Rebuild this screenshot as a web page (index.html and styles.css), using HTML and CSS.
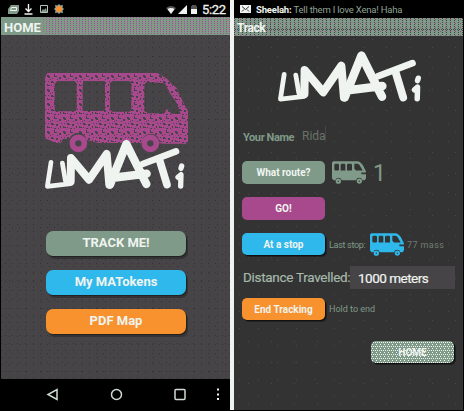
FILE: index.html
```html
<!DOCTYPE html>
<html lang="en">
<head>
<meta charset="utf-8">
<title>UMATi</title>
<link rel="stylesheet" href="styles.css">
</head>
<body>
<svg class="defs" width="0" height="0">
  <defs>
    <pattern id="mosaic" width="48" height="42" patternUnits="userSpaceOnUse">
      <rect width="48" height="42" fill="#a9498d"/>
      <path fill="#474447" d="M3 3h6v3h3v6h-6v-3h-3zM24 0h3v6h6v3h-9zM39 9h6v6h-6zM15 21h6v3h3v3h-9zM30 24h6v6h-6zM3 30h3v3h6v3h-9zM18 12h3v3h-3zM24 36h6v3h-6zM42 30h3v6h-3zM6 21h3v3h-3zM33 15h3v3h-3zM15 33h3v3h-3zM36 36h3v3h-3zM12 15h3v3h-3zM45 21h3v3h-3z"/>
    </pattern>
    <symbol id="word" viewBox="42 236 424 154">
      <g fill="none" stroke="#eff4f0" stroke-linecap="round" stroke-linejoin="round">
        <path stroke-width="14" d="M63 307L52 379L122 371M97 309L106 362"/>
        <path stroke-width="24" d="M122 364L123 294L177 359L230 282L238 374"/>
        <path stroke-width="25" d="M240 374L289 252L349 372M244 354L350 341"/>
        <path stroke-width="20" d="M338 312L438 274"/>
        <path stroke-width="23" d="M388 298L411 374"/>
        <path stroke-width="16" d="M455 318L453 325M444 352L453 344L452 378"/>
      </g>
    </symbol>
    <symbol id="bus" viewBox="0 0 102 68">
      <path fill="currentColor" fill-rule="evenodd" d="M4 0H78Q92 5 98 23L102 31V34H88V39H102V51L98 57H91A10 10 0 0 0 72 57H29A10 10 0 0 0 10 57H5L0 52V4ZM9 8L7 11V25L9 28H19L21 25V11L19 8ZM28 8L26 11V28H40V11L38 8ZM47 8L45 11V28H60V11L58 8ZM67 8V23L72 28H92L82 11L77 8Z"/>
      <path fill="none" stroke="currentColor" stroke-width="6" d="M24 60a5 5 0 1 1-10 0a5 5 0 1 1 10 0M87 60a5 5 0 1 1-10 0a5 5 0 1 1 10 0"/>
    </symbol>
  </defs>
</svg>
<main class="screens">
  <section class="phone phone-home">
    <header class="status">
      <svg class="status-icons" width="58" height="12" viewBox="0 0 58 12">
        <path fill="#7f9a88" d="M3 1h8v6L9 10H0V5z"/><path stroke="#eff4f0" fill="none" d="M3.500 3.500h5v3h-6z"/>
        <path stroke="#eff4f0" stroke-width="1.400" fill="none" d="M20.500 0v7M17.500 4.500l3 3l3-3M16.500 10h8"/>
        <path stroke="#b9c5bc" fill="none" d="M32.500 1.500h7v7h-7z"/><path fill="#7f9a88" d="M33 8l2-3l1 1l2-2l1 4z"/>
        <path fill="#93a899" d="M51 0l1.500 1.500l2.500-.5l-.5 2.500L56 5l-1.500 1.500l.5 2.500l-2.500-.5L51 10l-1.500-1.500l-2.500.5l.5-2.500L46 5l1.500-1.500L47 1l2.500.5z"/><circle cx="51" cy="5" r="3" fill="#f7922e"/>
      </svg>
      <svg class="signal-icons" width="33" height="10" viewBox="0 0 33 10">
        <path fill="#555355" d="M0 3Q5 -1 10 3L5 9z"/><path fill="#eff4f0" d="M1.500 4Q5 2 8.500 4L5 9z"/>
        <path fill="#eff4f0" d="M12 9L21 0V9z"/>
        <path fill="#555355" d="M25 1h1V0h4v1h1v4h-6z"/><path fill="#eff4f0" d="M25 4h6v5h-6z"/>
      </svg>
      <span class="clock">5:22</span>
    </header>
    <h1 class="title title-home">HOME</h1>
    <div class="content">
      <svg class="brand" viewBox="42 36 432 354">
        <path fill="url(#mosaic)" fill-rule="evenodd" d="M52 39H382L411 56L423 70L440 84L458 124L474 153V244L468 251H402L386 249V236C379 218 348 218 339 235L334 249H204L168 239C168 212 124 214 119 236L98 237L93 249H78L45 235V54ZM82 63L74 71V154H134L140 149V71L134 63ZM167 63L158 71V153H218L225 149V63ZM247 63L240 70V149L246 155H299L304 150V70L298 63ZM350 66L343 74V153L356 160H404L410 148L419 150L422 161H452L437 124L418 97L405 70Z"/>
        <g fill="none" stroke="#a9498d" stroke-width="17"><circle cx="145" cy="250" r="18"/><circle cx="361" cy="250" r="18"/></g>
        <use href="#word" x="42" y="236" width="424" height="154"/>
      </svg>
      <nav class="menu">
        <button class="btn green wide">TRACK ME!</button>
        <button class="btn blue wide">My MATokens</button>
        <button class="btn orange wide">PDF Map</button>
      </nav>
    </div>
    <footer class="navbar">
      <svg width="230" height="32" viewBox="0 0 230 32" fill="none" stroke="#cfdbd2" stroke-width="1.500">
        <path d="M57 10.500v10L48 15.500z"/><circle cx="116.500" cy="15.500" r="5"/><rect x="175" y="10.500" width="10" height="10" rx="1"/>
        <path stroke="none" fill="#eff4f0" d="M217 9.500h2v2h-2zM217 14.500h2v2h-2zM217 19h2v2h-2z"/>
      </svg>
    </footer>
  </section>
  <section class="phone phone-track">
    <header class="status notice">
      <svg class="mail" width="11" height="8" viewBox="0 0 11 8"><path fill="#eff4f0" d="M0 0h11v8H0z"/><path d="M2 1.500l3.500 3l3.500-3M2 6.500l2-2M9 6.500l-2-2" fill="none" stroke="#333"/></svg>
      <p><b>Sheelah:</b> <span>Tell them I love Xena! Haha</span></p>
    </header>
    <h1 class="title title-track">Track</h1>
    <div class="form">
      <svg class="wordmark"><use href="#word"/></svg>
      <div class="row name"><label>Your Name</label><span class="entry">Rida</span></div>
      <div class="row route"><button class="btn green">What route?</button><svg class="bus"><use href="#bus"/></svg><span class="number">1</span></div>
      <div class="row go"><button class="btn pink">GO!</button></div>
      <div class="row stop"><button class="btn blue shade">At a stop</button><span class="hint last">Last stop:</span><svg class="bus sky"><use href="#bus"/></svg><span class="hint mass">77 mass</span></div>
      <div class="row distance"><span class="dist-label">Distance Travelled:</span><span class="dist-value">1000 meters</span></div>
      <div class="row end"><button class="btn orange shade">End Tracking</button><span class="hint hold">Hold to end</span></div>
      <div class="row home"><button class="btn green shade speckled">HOME</button></div>
    </div>
  </section>
</main>
</body>
</html>
```
FILE: styles.css
```css
* { box-sizing: border-box; }
body { margin: 0; background: #000; font-family: Roboto, "Liberation Sans", sans-serif; color: #eff4f0; overflow: hidden; }
h1, p { margin: 0; }
.defs { position: absolute; }
svg { display: block; flex: none; }
.screens { display: flex; width: 464px; height: 411px; }
.phone { display: flex; flex-direction: column; height: 411px; flex: none; }
.phone-home { width: 230px; padding-left: 1px; }
.phone-track { width: 234px; height: 410px; border-left: 4px solid #eff4f0; padding-right: 1px; }
.status { display: flex; height: 17px; flex: none; background: #000; }
.status-icons { margin: 4px 0 0 7px; }
.signal-icons { margin: 5px 3px 0 100px; }
.clock { font-size: 13px; line-height: 19px; letter-spacing: -.3px; -webkit-text-stroke: .3px; }
.title { flex: none; height: 18px; font-size: 13px; line-height: 21px; padding-left: 3px; background-color: #7f9a88; }
.title-home {
  background-image: linear-gradient(90deg, #7f9a88 38px, transparent 48px), conic-gradient(at 1px 1px, transparent 75%, #a9498d 0), conic-gradient(at 1px 1px, transparent 75%, #a9498d 0);
  background-size: 100% 100%, 6px 4px, 3px 2px;
  background-position: 0 0, 0 2px, 0 6px;
  background-repeat: no-repeat, repeat-x, repeat;
  background-size: 100% 100%, 6px 4px, 3px 2px;
}
.content {
  height: 344px; flex: none; padding: 37px 0 0 43px; background-color: #474447;
  background-image: conic-gradient(at 1px 1px, transparent 75%, #333 0), conic-gradient(at 1px 1px, transparent 75%, #333 0);
  background-size: 8px 7px, 7px 9px;
  background-position: 0 0, 4px 3px;
}
.brand { width: 144px; height: 118px; }
.menu { display: flex; flex-direction: column; gap: 14px; margin: 41px 0 0 2px; }
.btn { border: 0; border-radius: 5px; padding: 0; width: 83px; height: 23px; font: bold 10px/19px Roboto, "Liberation Sans", sans-serif; color: #eff4f0; flex: none; white-space: nowrap; }
.wide { width: 140px; height: 25px; border-radius: 7px; font-size: 13px; box-shadow: 1px 1px 0 #222, 2px 3px 0 #333; padding-bottom: 3px; }
.shade { height: 22px; box-shadow: 1px 1px 0 #111, 2px 2px 0 #222; }
.green { background-color: #7f9a88; }
.blue { background-color: #2fb8eb; }
.orange { background-color: #f7922e; }
.pink { background-color: #a9498d; }
.navbar { height: 32px; flex: none; margin-left: -1px; }
.notice { height: 18px; align-items: center; padding-left: 6px; gap: 5px; font-size: 9.5px; letter-spacing: -.2px; }
.notice span { color: #91a397; }
.title-track {
  font-size: 12px; line-height: 20px; letter-spacing: -.4px;
  background-image: conic-gradient(at 1px 1px, transparent 75%, #a9498d 0), conic-gradient(at 1px 1px, transparent 75%, #474447 0), conic-gradient(at 1px 1px, transparent 75%, #474447 0);
  background-size: 5px 4px, 4px 2px, 2px 2px;
  background-position: 1px 1px, 0 0, 1px 11px;
  background-repeat: repeat, repeat, repeat-x;
}
.form {
  flex: 1; background-color: #333; padding: 14px 0 0 8px;
  background-image: conic-gradient(at 1px 1px, transparent 75%, #484848 0), conic-gradient(at 1px 1px, transparent 75%, #484848 0);
  background-size: 19px 17px, 23px 21px;
  background-position: 5px 3px, 14px 11px;
}
.wordmark { width: 145px; height: 53px; margin-left: 35px; }
.row { display: flex; height: 23px; }
.name { margin-top: 23px; font-size: 11px; line-height: 23px; color: #7f9a88; height: 17px; }
.name label { width: 60px; padding-left: 1px; font-weight: bold; line-height: 23px; letter-spacing: -.4px; }
.entry { color: #68736b; font-size: 12px; line-height: 20px; border-right: 1px solid #474447; width: 24px; height: 16px; }
.route { margin-top: 18px; color: #7f9a88; }
.bus { width: 34px; height: 23px; margin-left: 7px; }
.number { font-size: 23px; line-height: 25px; margin-left: 7px; }
.go { margin-top: 13px; }
.stop { margin-top: 13px; }
.hint { color: #7f9a88; font-size: 9px; line-height: 24px; margin-left: 4px; white-space: nowrap; }
.last { width: 37px; letter-spacing: -.3px; }
.sky { color: #2fb8eb; margin-left: 4px; }
.mass { color: #717d74; letter-spacing: .4px; margin-left: 3px; }
.distance { margin-top: 10px; font-size: 13.5px; line-height: 23px; }
.dist-label { width: 108px; padding-left: 1px; color: #a5b8aa; white-space: nowrap; letter-spacing: -.3px; -webkit-text-stroke: .2px; }
.dist-value { width: 105px; padding-left: 8px; background: #474447; line-height: 25px; letter-spacing: -.5px; -webkit-text-stroke: .2px; }
.end { margin-top: 9px; }
.end .hint { line-height: 22px; }
.home { margin: 20px 0 0 129px; }
.speckled {
  background-image: conic-gradient(at 1px 1px, transparent 75%, #eff4f0 0), conic-gradient(at 1px 1px, transparent 75%, #eff4f0 0);
  background-size: 2px 4px, 4px 4px;
  background-position: 0 1px, 1px 3px;
}
```
